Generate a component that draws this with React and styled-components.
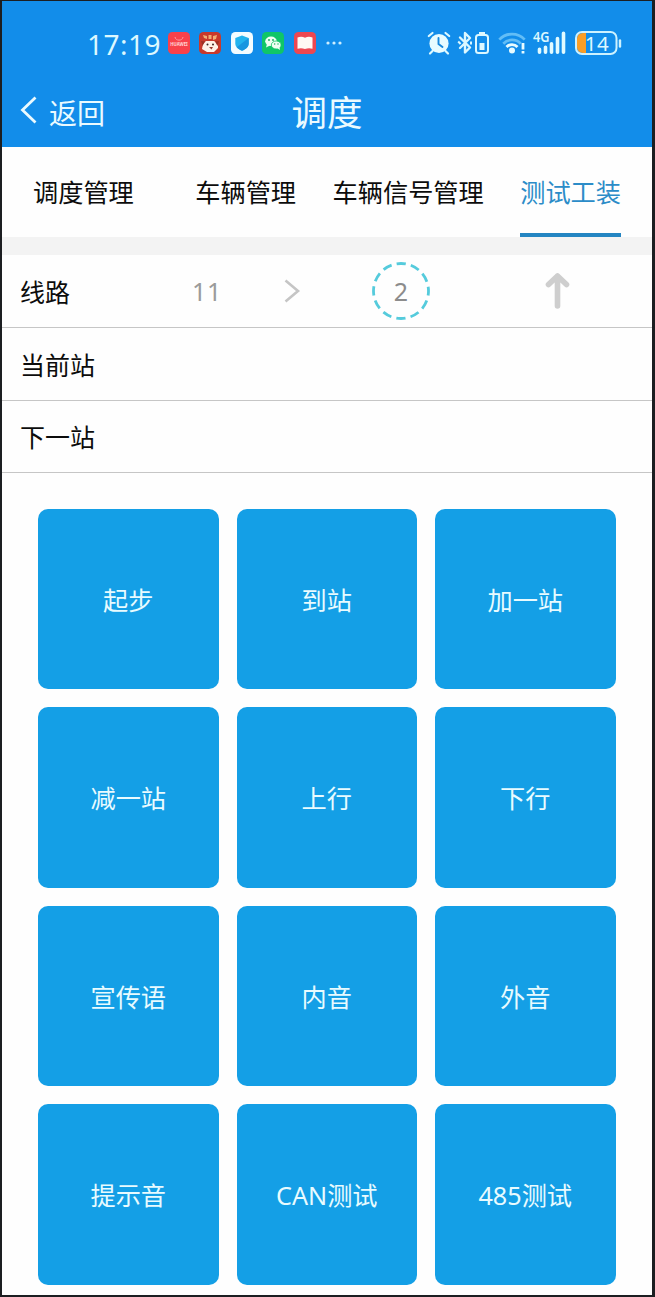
import React from "react";
import styled, { createGlobalStyle } from "styled-components";

const Global = createGlobalStyle`
  * { box-sizing: border-box; }
  body { margin: 0; background: #1c1e21; font-family: "Noto Sans", "Noto Sans CJK SC", sans-serif; }
  svg { display: block; flex: none; overflow: visible; }
`;

const Frame = styled.div`
  width: 655px;
  height: 1297px;
  padding: 1px 3px 2px 2px;
  background: #1c1e21;
  overflow: hidden;
`;
const Screen = styled.main`
  height: 1294px;
  background: #fefefe;
  overflow: hidden;
`;
const Header = styled.header`
  height: 145.6px;
  background: #128dea;
  color: #eafaff;
`;
const StatusBar = styled.div`
  display: flex;
  align-items: center;
  height: 84px;
  padding: 0 30px 0 85px;
`;
const Clock = styled.time`
  width: 81px;
  padding-top: 1px;
  font-size: 28px;
  line-height: 30px;
  letter-spacing: 0.5px;
  color: #dcf8ff;
  white-space: nowrap;
`;
const AppIcons = styled.div`
  display: flex;
  align-items: center;
  gap: 9.4px;
`;
const Dots = styled.svg`
  margin-left: 9px;
`;
const SystemIcons = styled.div`
  display: flex;
  align-items: center;
  margin-left: auto;
  color: #dcf8ff;
`;
const Glyph = styled.svg`
  margin-left: ${(p) => p.$gap || 0}px;
`;
const NavBar = styled.div`
  display: grid;
  grid-template-columns: 1fr auto 1fr;
  align-items: center;
  height: 54px;
  padding: 0 18px;
`;
const Back = styled.button`
  display: flex;
  align-items: center;
  gap: 12px;
  padding: 0;
  border: 0;
  background: none;
  color: inherit;
  font: inherit;
  font-size: 28px;
  line-height: 34px;

  > svg { margin-bottom: 4px; }
  > span { padding-top: 1px; }
`;
const Title = styled.h1`
  margin: 0;
  font-size: 35.5px;
  font-weight: 400;
  line-height: 48px;
`;
const Tabs = styled.nav`
  display: flex;
  justify-content: space-between;
  height: 90px;
  padding: 0 31px;
`;
const Tab = styled.a`
  height: 90px;
  margin-left: ${(p) => p.$gap || 0}px;
  font-size: 25.2px;
  line-height: 91px;
  white-space: nowrap;
  color: ${(p) => (p.$active ? "#2b8cc8" : "#0c0c0c")};
  box-shadow: ${(p) => (p.$active ? "inset 0 -4px #2485c2" : "none")};
`;
const Divider = styled.div`
  height: 18px;
  background: #f3f3f3;
`;
const Row = styled.div`
  display: flex;
  align-items: center;
  height: ${(p) => p.$height || 73}px;
  padding-left: 18px;
  border-bottom: 1px solid #c6c6c6;
  font-size: 25px;
  line-height: 34px;
  color: #0c0c0c;
`;
const RowLabel = styled.span`
  width: 172px;
  padding-top: 2px;
`;
const LineNumber = styled.span`
  width: 92px;
  padding-top: 1px;
  font-size: 25px;
  letter-spacing: 0.8px;
  color: #9b9b9b;
`;
const Stop = styled.div`
  display: grid;
  place-items: center;
  width: 58px;
  height: 58px;
  margin-left: 72px;
  color: #8c8c8c;

  > * { grid-area: 1 / 1; }
  > span { padding-top: 1px; }
`;
const Direction = styled.svg`
  margin-left: 115px;
`;
const Tiles = styled.section`
  display: grid;
  grid-template-columns: repeat(3, 180.5px);
  grid-auto-rows: 180.5px;
  gap: 18px;
  padding: 36px 36px;
`;
const Tile = styled.button`
  padding: 2px 0 0;
  border: 0;
  border-radius: 10px;
  background: #149fe6;
  color: #e8fbff;
  font: inherit;
  font-size: 25.2px;
  line-height: 34px;
`;

const AppBadge = ({ color, children }) => (
  <svg width="22" height="22" viewBox="0 0 22 22">
    <rect width="22" height="22" rx="4.5" fill={color} />
    {children}
  </svg>
);

const StoreBadge = () => (
  <AppBadge color="#f8414b">
    <path d="M7 5c.5 4.2 7.500 4.200 8 0" fill="none" stroke="#ff9b9d" strokeWidth="1" />
    <text x="11" y="14.200" textAnchor="middle" fontSize="4.300" fontWeight="700" fill="#ffd9d9" fontFamily="Noto Sans, sans-serif">HUAWEI</text>
  </AppBadge>
);

const DogBadge = () => (
  <AppBadge color="#c8392b">
    <path d="M4 3l4 1v3l-3-1zM14 4l4-1-1 4-3 1zM9.500 3h3v4h-3z" fill="#f2ae72" />
    <path d="M4 12l3-3h8l4 3v4l-4 4H8l-5-3z" fill="#fff1e8" />
    <path d="M2 9l4 .5-2.500 4.500zM20 9l-4 .5 2.500 4.500z" fill="#9c3024" />
    <circle cx="8.500" cy="12.500" r="1" fill="#3c2522" />
    <circle cx="14" cy="12.500" r="1" fill="#3c2522" />
    <path d="M10 15h4l-1.500 2.500z" fill="#96382e" />
  </AppBadge>
);

const ShieldBadge = () => (
  <AppBadge color="#f4fcff">
    <path d="M11 3.500l6.700 2.400v5.600c0 3.400-3.200 5.900-6.700 7.300-3.500-1.400-6.700-3.900-6.700-7.300V5.900z" fill="#22b3ee" />
    <path d="M17.700 5.900v5.600c0 3.400-3.200 5.900-6.700 7.300-2-.8-4-2-5.300-3.500z" fill="#1796e0" />
  </AppBadge>
);

const ChatBadge = () => (
  <AppBadge color="#10c667">
    <ellipse cx="9" cy="9.300" rx="5.800" ry="4.800" fill="#effff3" />
    <path d="M5 12l-1 3.500 4-2z" fill="#effff3" />
    <ellipse cx="14.200" cy="13" rx="4.900" ry="4" fill="#effff3" stroke="#10c667" strokeWidth=".8" />
    <path d="M15 16l3 2-.5-3z" fill="#effff3" />
    <g fill="#10a957"><circle cx="7" cy="8" r=".9" /><circle cx="11" cy="8" r=".9" /><circle cx="12.700" cy="12" r=".7" /><circle cx="16" cy="12" r=".7" /></g>
  </AppBadge>
);

const BookBadge = () => (
  <AppBadge color="#ed4751">
    <path d="M3.500 5.500q4-1.500 7.500.3 3.500-1.800 7.500-.3v11.200q-4-1-7.500.3-3.500-1.300-7.500-.3z" fill="#fff8f3" />
  </AppBadge>
);

const AlarmIcon = () => (
  <Glyph width="24" height="24" viewBox="0 0 24 24" fill="none" stroke="currentColor" strokeLinecap="round">
    <circle cx="12" cy="12.500" r="9.600" fill="#e7fbff" stroke="none" />
    <path d="M1.800 5l3.700-3M22.200 5l-3.700-3M5.500 20L3 22.500M18.500 20l2.500 2.500" strokeWidth="2.200" />
    <path d="M11.500 7v6l4 3" stroke="#1687dc" strokeWidth="1.900" />
  </Glyph>
);

const BluetoothIcon = () => (
  <Glyph $gap={7} width="15" height="24" viewBox="0 0 15 24" fill="none" stroke="currentColor" strokeWidth="2.400">
    <path d="M2 6.500l10 10-5 5V2l5 5-10 10" strokeLinejoin="round" strokeLinecap="round" />
    <path d="M.2 10.500l2.400 2.500M13 10.500v3" strokeWidth="2" />
  </Glyph>
);

const SmallBatteryIcon = () => (
  <Glyph $gap={2} width="14" height="24" viewBox="0 0 14 24">
    <rect x="1" y="4" width="12" height="18" rx="2.500" fill="none" stroke="currentColor" strokeWidth="2" />
    <path d="M4 1h6v2H4zM4.500 12h5v7h-5z" fill="currentColor" />
  </Glyph>
);

const WifiIcon = () => (
  <Glyph $gap={9} width="28" height="24" viewBox="0 0 28 24" fill="none" strokeWidth="2.800">
    <path d="M1.300 8.600c7-7.300 18.400-7.300 25.400 0" stroke="#62bdf6" />
    <path d="M5.300 12.700c4.800-5 12.600-5 17.400 0" stroke="#62bdf6" />
    <path d="M8.500 16c3-3.300 8-3.300 11 0" stroke="#e7fbff" />
    <circle cx="14" cy="19.500" r="3" fill="#e7fbff" />
    <path d="M25 12v6.500M25 20v2.500" stroke="#e7fbff" />
  </Glyph>
);

const SignalIcon = () => (
  <Glyph $gap={7} width="34" height="24" viewBox="0 0 34 24">
    <text x="0" y="10.500" fontSize="13.500" fontWeight="600" textLength="16.500" lengthAdjust="spacingAndGlyphs" fill="currentColor" fontFamily="Noto Sans, sans-serif">4G</text>
    <path d="M6.500 21.300v-3M12.500 21.300v-5M18.500 21.300v-8.500M24.500 21.300V7.500M30.500 21.300V2.300" stroke="#e0faff" strokeWidth="3.600" strokeLinecap="round" />
  </Glyph>
);

const BatteryIcon = () => (
  <Glyph $gap={8} width="47" height="24" viewBox="0 0 47 24">
    <path d="M8 2h3v20H8q-6-.5-6-6V8q0-6 6-6z" fill="#fb9e25" />
    <rect x="1" y="1" width="40.500" height="22" rx="6" fill="none" stroke="#cdf2ff" strokeWidth="2" />
    <path d="M45 9.500v6" stroke="#cdf2ff" strokeWidth="2.400" strokeLinecap="round" />
    <text x="22" y="19.500" textAnchor="middle" fontSize="20.500" letterSpacing=".6" fill="#dcf8ff" fontFamily="Noto Sans, sans-serif">14</text>
  </Glyph>
);

const tiles = ["起步", "到站", "加一站", "减一站", "上行", "下行", "宣传语", "内音", "外音", "提示音", "CAN测试", "485测试"];

export default function App() {
  return (
    <Frame>
      <Global />
      <Screen>
        <Header>
          <StatusBar>
            <Clock>17:19</Clock>
            <AppIcons>
              <StoreBadge />
              <DogBadge />
              <ShieldBadge />
              <ChatBadge />
              <BookBadge />
            </AppIcons>
            <Dots width="18" height="4" fill="#cdeeff">
              <circle cx="3" cy="2" r="1.600" />
              <circle cx="9" cy="2" r="1.600" />
              <circle cx="15" cy="2" r="1.600" />
            </Dots>
            <SystemIcons>
              <AlarmIcon />
              <BluetoothIcon />
              <SmallBatteryIcon />
              <WifiIcon />
              <SignalIcon />
              <BatteryIcon />
            </SystemIcons>
          </StatusBar>
          <NavBar>
            <Back>
              <svg width="17" height="28" viewBox="0 0 17 28" fill="none" stroke="currentColor" strokeWidth="2.800">
                <path d="M15.500 1.500L2.500 14l13 12.500" />
              </svg>
              <span>返回</span>
            </Back>
            <Title>调度</Title>
          </NavBar>
        </Header>
        <Tabs>
          <Tab>调度管理</Tab>
          <Tab $gap={25}>车辆管理</Tab>
          <Tab>车辆信号管理</Tab>
          <Tab $active>测试工装</Tab>
        </Tabs>
        <Divider />
        <Row>
          <RowLabel>线路</RowLabel>
          <LineNumber>11</LineNumber>
          <svg width="16" height="24" viewBox="0 0 16 24" fill="none" stroke="#c5c5c5" strokeWidth="2.600">
            <path d="M1.500 1.500L14 12 1.500 22.500" />
          </svg>
          <Stop>
            <svg width="58" height="58" viewBox="0 0 58 58">
              <circle cx="29" cy="29" r="27.500" fill="none" stroke="#55cbdc" strokeWidth="2.800" strokeDasharray="9.200 5.200" strokeDashoffset="4.600" />
            </svg>
            <span>2</span>
          </Stop>
          <Direction width="24" height="36" viewBox="0 0 24 36" fill="none" stroke="#cecece" strokeWidth="5.600" strokeLinecap="round" strokeLinejoin="round">
            <path d="M12.500 33V3M3.500 11.500l9-8.500 9 8.500" />
          </Direction>
        </Row>
        <Row><RowLabel>当前站</RowLabel></Row>
        <Row $height={72}><RowLabel>下一站</RowLabel></Row>
        <Tiles>
          {tiles.map((label) => (
            <Tile key={label}>{label}</Tile>
          ))}
        </Tiles>
      </Screen>
    </Frame>
  );
}
